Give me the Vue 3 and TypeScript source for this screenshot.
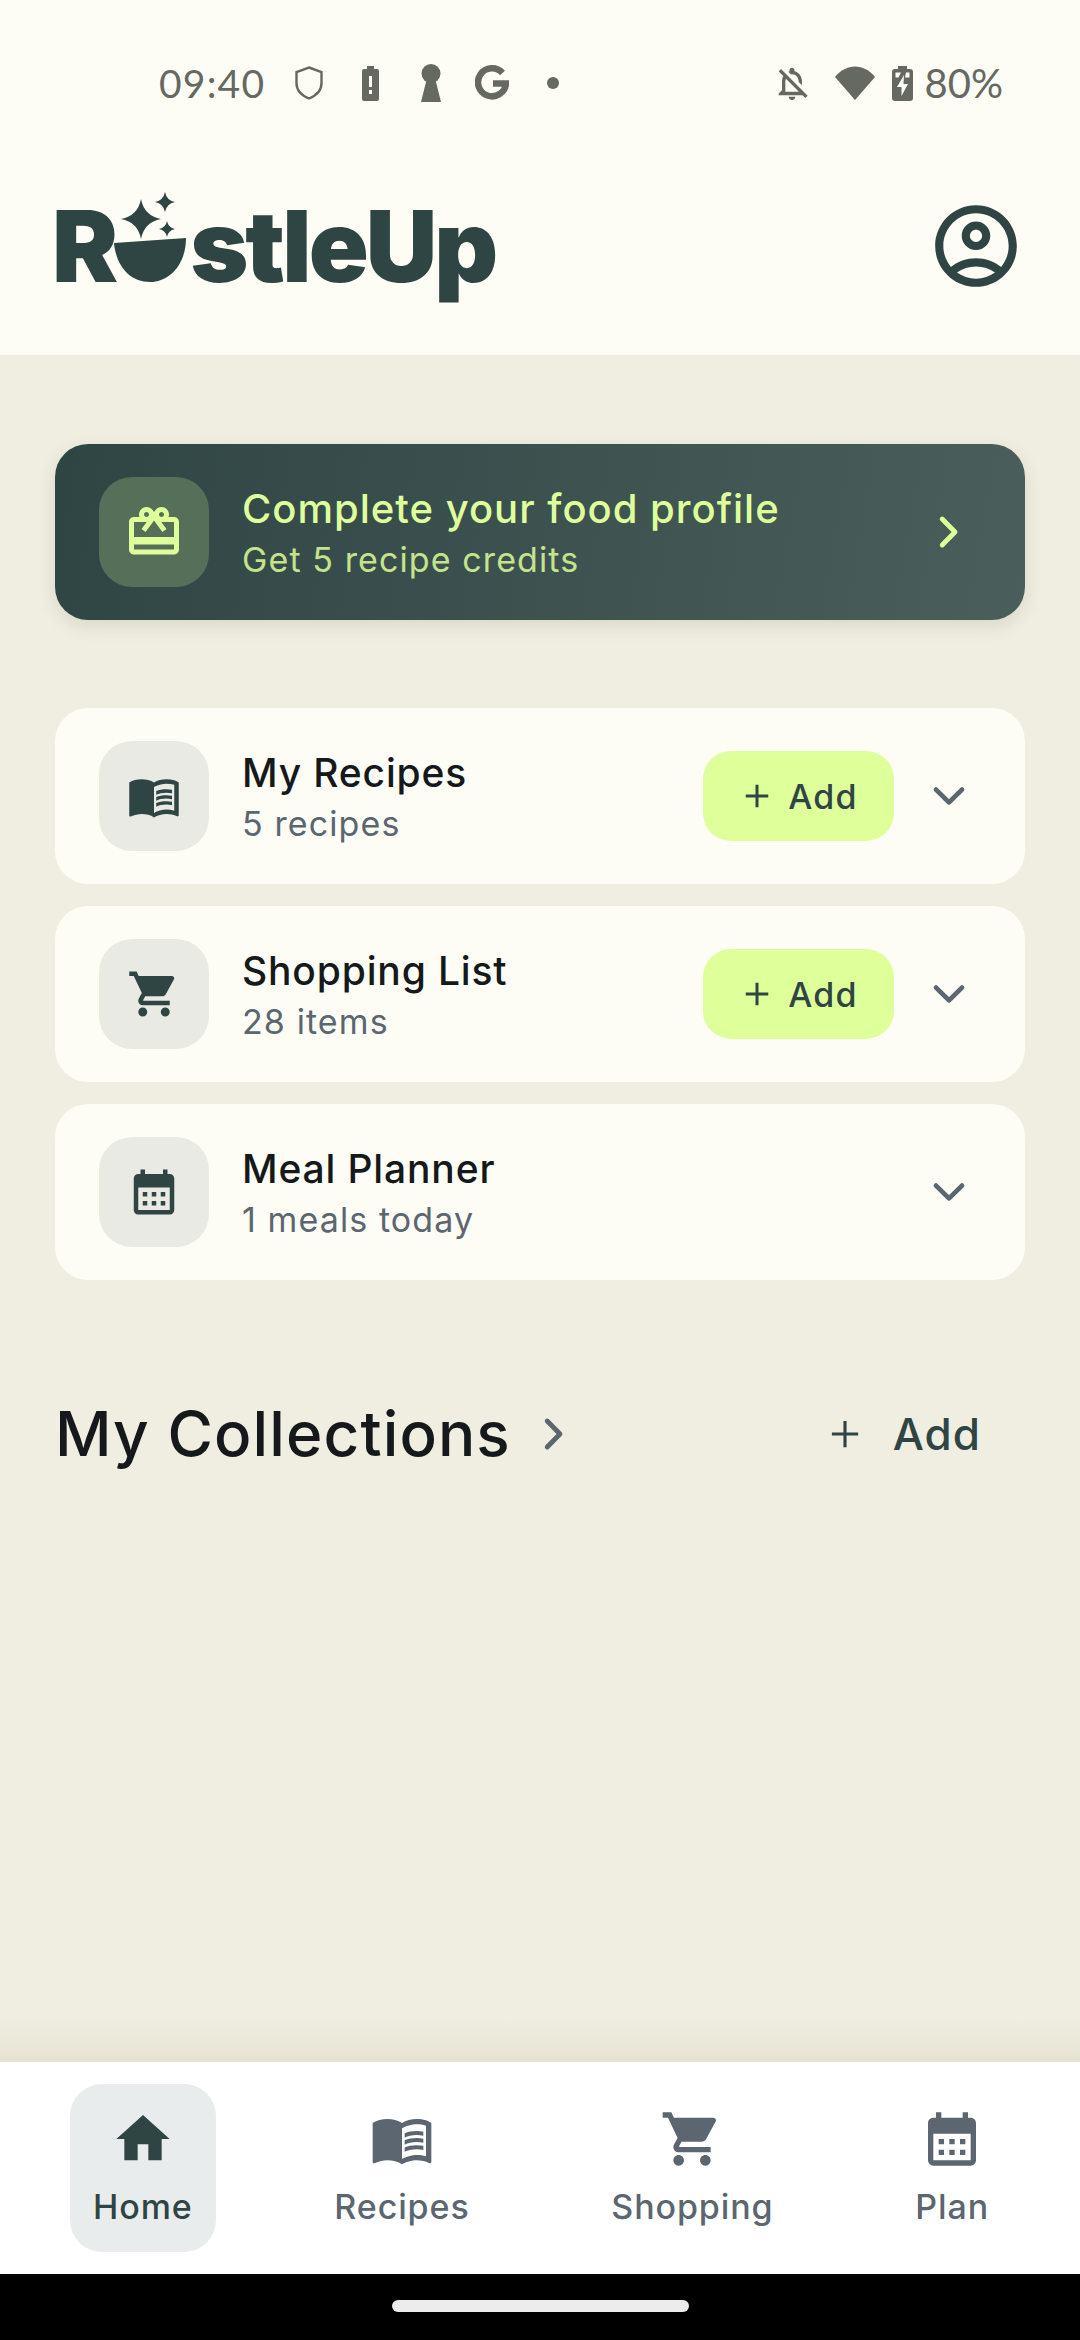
<script setup lang="ts">
const icons = {
  book: 'M21 5c-1.11-.35-2.33-.5-3.5-.5-1.95 0-4.05.4-5.5 1.5-1.45-1.1-3.55-1.5-5.5-1.5S2.45 4.9 1 6v14.65c0 .25.25.5.5.5.1 0 .15-.05.25-.05C3.1 20.45 5.05 20 6.5 20c1.95 0 4.05.4 5.5 1.5 1.35-.85 3.8-1.5 5.5-1.5 1.65 0 3.35.3 4.75 1.05.1.05.15.05.25.05.25 0 .5-.25.5-.5V6c-.6-.45-1.25-.75-2-1zm0 13.5c-1.1-.35-2.3-.5-3.5-.5-1.7 0-4.15.65-5.5 1.5V8c1.35-.85 3.8-1.5 5.5-1.5 1.2 0 2.4.15 3.5.5v11.5zM17.5 10.5c.88 0 1.73.09 2.5.26V9.24c-.79-.15-1.64-.24-2.5-.24-1.7 0-3.24.29-4.5.83v1.66c1.13-.64 2.7-.99 4.5-.99zM13 12.49v1.66c1.13-.64 2.7-.99 4.5-.99.88 0 1.73.09 2.5.26V11.9c-.79-.15-1.64-.24-2.5-.24-1.7 0-3.24.3-4.5.83zM17.5 14.33c-1.7 0-3.24.29-4.5.83v1.66c1.13-.64 2.7-.99 4.5-.99.88 0 1.73.09 2.5.26v-1.52c-.79-.16-1.64-.24-2.5-.24z',
  cart: 'M7 18c-1.1 0-1.99.9-1.99 2S5.9 22 7 22s2-.9 2-2-.9-2-2-2zM1 2v2h2l3.6 7.59-1.35 2.45c-.16.28-.25.61-.25.96 0 1.1.9 2 2 2h12v-2H7.42c-.14 0-.25-.11-.25-.25l.03-.12.9-1.63h7.45c.75 0 1.41-.41 1.75-1.03l3.58-6.49c.08-.14.12-.31.12-.48 0-.55-.45-1-1-1H5.21l-.94-2H1zm16 16c-1.1 0-1.99.9-1.99 2s.89 2 1.99 2 2-.9 2-2-.9-2-2-2z',
  calendar: 'M19 4h-1V2h-2v2H8V2H6v2H5c-1.11 0-1.99.9-1.99 2L3 20a2 2 0 0 0 2 2h14c1.1 0 2-.9 2-2V6c0-1.1-.9-2-2-2zm0 16H5V10h14v10zM9 14H7v-2h2v2zm4 0h-2v-2h2v2zm4 0h-2v-2h2v2zm-8 4H7v-2h2v2zm4 0h-2v-2h2v2zm4 0h-2v-2h2v2z',
  home: 'M10 20v-6h4v6h5v-8h3L12 3 2 12h3v8z',
  gift: 'M20 6h-2.18c.11-.31.18-.65.18-1 0-1.66-1.34-3-3-3-1.05 0-1.96.54-2.5 1.35l-.5.67-.5-.68C10.96 2.54 10.05 2 9 2 7.34 2 6 3.34 6 5c0 .35.07.69.18 1H4c-1.11 0-1.99.89-1.99 2L2 19c0 1.11.89 2 2 2h16c1.11 0 2-.89 2-2V8c0-1.11-.89-2-2-2zm-5-2c.55 0 1 .45 1 1s-.45 1-1 1-1-.45-1-1 .45-1 1-1zM9 4c.55 0 1 .45 1 1s-.45 1-1 1-1-.45-1-1 .45-1 1-1zm11 15H4v-2h16v2zm0-5H4V8h5.08L7 10.83 8.62 12 11 8.76l1-1.36 1 1.36L15.38 12 17 10.83 14.92 8H20v6z',
  account: 'M12 2C6.48 2 2 6.48 2 12s4.48 10 10 10 10-4.48 10-10S17.52 2 12 2zM7.35 18.5C8.66 17.56 10.26 17 12 17s3.34.56 4.65 1.5c-1.31.94-2.91 1.5-4.65 1.5s-3.34-.56-4.65-1.5zm10.79-1.38C16.45 15.8 14.32 15 12 15s-4.45.8-6.14 2.12C4.7 15.73 4 13.95 4 12c0-4.42 3.58-8 8-8s8 3.58 8 8c0 1.95-.7 3.73-1.86 5.12zM12 6c-1.93 0-3.5 1.57-3.5 3.5S10.07 13 12 13s3.5-1.57 3.5-3.5S13.93 6 12 6zm0 5c-.83 0-1.5-.67-1.5-1.5S11.17 8 12 8s1.5.67 1.5 1.5S12.83 11 12 11z',
  bellOff: 'M12 22c1.1 0 2-.9 2-2h-4c0 1.1.9 2 2 2zm0-15.5c2.49 0 4 2.02 4 4.5v.1l2 2V11c0-3.07-1.63-5.64-4.5-6.32V4c0-.83-.67-1.5-1.5-1.5s-1.5.67-1.5 1.5v.68c-.24.06-.47.15-.69.23l1.64 1.64c.18-.02.36-.05.55-.05zM5.41 3.35L4 4.76l2.81 2.81C6.29 8.57 6 9.74 6 11v5l-2 2v1h14.24l1.74 1.74 1.41-1.41L5.41 3.35zM16 17H8v-6c0-.68.12-1.32.34-1.9L16 16.76V17z',
}

const cards = [
  { title: 'My Recipes', sub: '5 recipes', icon: icons.book, add: true },
  { title: 'Shopping List', sub: '28 items', icon: icons.cart, add: true },
  { title: 'Meal Planner', sub: '1 meals today', icon: icons.calendar, add: false },
]

const tabs = [
  { label: 'Home', icon: icons.home, active: true },
  { label: 'Recipes', icon: icons.book, active: false },
  { label: 'Shopping', icon: icons.cart, active: false },
  { label: 'Plan', icon: icons.calendar, active: false },
]

function sparkle(cx: number, cy: number, r: number): string {
  const k = r * 0.16
  return `M${cx} ${cy - r}Q${cx + k} ${cy - k} ${cx + r} ${cy}Q${cx + k} ${cy + k} ${cx} ${cy + r}Q${cx - k} ${cy + k} ${cx - r} ${cy}Q${cx - k} ${cy - k} ${cx} ${cy - r}Z`
}
const sparkles = [sparkle(27, 29, 20), sparkle(51, 12, 10), sparkle(53, 39, 8)].join('')
</script>

<template>
  <div class="screen">
    <header class="top">
      <div class="status">
        <span class="time">09:40</span>
        <span class="sb"><svg width="28" height="34" viewBox="0 0 28 34"><path d="M14 1.500 26.500 6v11c0 7-5 12.500-12.500 15.500C6.500 29.500 1.500 24 1.500 17V6z" fill="none" stroke="#666862" stroke-width="2.400" /></svg></span>
        <span class="sb"><svg width="17" height="35" viewBox="0 0 17 35"><path fill-rule="evenodd" d="M5 0h7v3h3a2 2 0 0 1 2 2v28a2 2 0 0 1-2 2H2a2 2 0 0 1-2-2V5a2 2 0 0 1 2-2h3zM7 10v11h3V10zM7 24v4h3v-4z" fill="#666862" /></svg></span>
        <span class="sb"><svg width="20" height="38" viewBox="0 0 20 38"><circle cx="10" cy="9.500" r="9.500" fill="#666862" /><path d="M6 14h8l6 24H0z" fill="#666862" /></svg></span>
        <span class="sb"><svg width="34" height="36" viewBox="0 0 34 36"><path d="M27.500 8A14 14 0 1 0 31 18.500H18" fill="none" stroke="#666862" stroke-width="6.500" /></svg></span>
        <span class="sb"><svg width="12" height="12" viewBox="0 0 12 12"><circle cx="6" cy="6" r="6" fill="#666862" /></svg></span>
        <span class="sb bell"><svg width="43" height="43" viewBox="0 0 24 24"><path :d="icons.bellOff" fill="#666862" /></svg></span>
        <svg class="wifi" width="40" height="34" viewBox="0 0 40 34"><path d="M0 11C11-3 29-3 40 11L20 34z" fill="#666862" /></svg>
        <svg class="batt" width="21" height="35" viewBox="0 0 21 35"><path fill-rule="evenodd" d="M6 0h9v3h3a3 3 0 0 1 3 3v26a3 3 0 0 1-3 3H3a3 3 0 0 1-3-3V6a3 3 0 0 1 3-3h3zM12 9 5 21h4.500v9L16 18h-4.500zM3.500 6.500v5h3l2.500-5zM14 6.500l-1 5h4.500v-5z" fill="#666862" /></svg>
        <span class="pct">80%</span>
      </div>
      <div class="brand">
        <div class="logo">
          <span>R</span>
          <svg class="bowl" width="72" height="92" viewBox="0 0 72 92">
            <path :d="sparkles" fill="#2f4544" />
            <path d="M0 53 72 48C72 75 55 92 36 92 15 92 2 75 0 53z" fill="#2f4544" />
          </svg>
          <span class="rest">stleUp</span>
        </div>
        <svg class="account" width="98" height="98" viewBox="0 0 24 24"><path :d="icons.account" fill="#2f4544" /></svg>
      </div>
    </header>

    <main class="content">
      <section class="promo">
        <div class="tile promo-tile">
          <svg width="60" height="60" viewBox="0 0 24 24"><path :d="icons.gift" fill="#dfff9a" /></svg>
        </div>
        <div class="promo-text">
          <div class="promo-title">Complete your food profile</div>
          <div class="promo-sub">Get 5 recipe credits</div>
        </div>
        <svg class="chev" width="48" height="48" viewBox="0 0 24 24"><path d="M8.600 5.500 15 12l-6.400 6.500" fill="none" stroke="#dfff9a" stroke-width="2.400" stroke-linecap="round" stroke-linejoin="round" /></svg>
      </section>

      <div class="cards">
        <section v-for="c in cards" :key="c.title" class="card">
          <div class="tile">
            <svg width="54" height="54" viewBox="0 0 24 24"><path :d="c.icon" fill="#2f4544" /></svg>
          </div>
          <div class="card-text">
            <div class="card-title">{{ c.title }}</div>
            <div class="card-sub">{{ c.sub }}</div>
          </div>
          <div v-if="c.add" class="add-btn">
            <svg width="36" height="36" viewBox="0 0 24 24"><path d="M12 4.500v15M4.500 12h15" stroke="#2f4544" stroke-width="2" fill="none" /></svg>
            <span>Add</span>
          </div>
          <svg class="chev" width="48" height="48" viewBox="0 0 24 24"><path d="M5.500 8.800 12 15.200l6.500-6.400" fill="none" stroke="#5b6670" stroke-width="2.400" stroke-linecap="round" stroke-linejoin="round" /></svg>
        </section>
      </div>

      <div class="coll-head">
        <h2>My Collections</h2>
        <svg width="48" height="48" viewBox="0 0 24 24"><path d="M8.600 5.500 15 12l-6.400 6.500" fill="none" stroke="#5b6670" stroke-width="2.400" stroke-linecap="round" stroke-linejoin="round" /></svg>
        <div class="coll-add">
          <svg width="42" height="42" viewBox="0 0 24 24"><path d="M12 4.500v15M4.500 12h15" stroke="#2f4544" stroke-width="1.800" fill="none" /></svg>
          <span>Add</span>
        </div>
      </div>
      <div class="nav-shade"></div>
    </main>

    <nav class="tabs">
      <div v-for="t in tabs" :key="t.label" class="tab" :class="{ active: t.active }">
        <svg width="64" height="64" viewBox="0 0 24 24"><path :d="t.icon" fill="currentColor" /></svg>
        <span>{{ t.label }}</span>
      </div>
    </nav>
    <div class="gesture"><div class="handle"></div></div>
  </div>
</template>

<style>
html, body { margin: 0; background: #f0eee0; }
</style>

<style scoped>
.screen {
  width: 1080px;
  height: 2340px;
  display: flex;
  flex-direction: column;
  overflow: hidden;
  font-family: Inter, "Noto Sans", sans-serif;
  color: #15191b;
}
.top { background: #fdfdf5; height: 355px; flex: none; }
.status {
  height: 110px;
  padding: 56px 79px 0 159px;
  box-sizing: border-box;
  display: flex;
  align-items: center;
  gap: 21px;
  color: #666862;
  font-size: 36px;
  font-family: Lato, Inter, sans-serif;
}
.time { font-size: 39px; letter-spacing: 1.2px; line-height: 1; margin-right: 3px; }
.sb { width: 40px; display: flex; justify-content: center; align-items: center; }
.bell { margin-left: auto; }
.wifi { margin-left: 2px; }
.batt { margin-left: -4px; }
.pct { font-size: 40px; margin-left: -9px; margin-right: -2px; line-height: 1; }

.brand {
  height: 245px;
  padding: 0 55px 0 52px;
  display: flex;
  align-items: center;
  justify-content: space-between;
}
.logo {
  display: flex;
  align-items: baseline;
  font-weight: 900;
  font-size: 99px;
  line-height: 1;
  letter-spacing: -3px;
  color: #2f4544;
  margin-top: 20px;
}
.bowl { margin: 0 4px -5px -1px; overflow: visible; }
.rest { letter-spacing: -3px; }
.account { display: block; margin-top: 27px; }

.content {
  flex: 1;
  position: relative;
  padding: 89px 55px 0;
  display: flex;
  flex-direction: column;
}
.promo {
  height: 176px;
  box-sizing: border-box;
  border-radius: 33px;
  padding: 0 52px 0 44px;
  display: flex;
  align-items: center;
  background: linear-gradient(100deg, #2f4544, #4a5f5b);
  box-shadow: 0 6px 18px rgba(60, 60, 30, 0.12);
}
.tile {
  width: 110px;
  height: 110px;
  flex: none;
  border-radius: 33px;
  background: #e9eae4;
  display: flex;
  align-items: center;
  justify-content: center;
}
.promo-tile { background: #566f59; }
.promo-text, .card-text { flex: 1; margin-left: 33px; }
.promo-title { font-size: 40px; font-weight: 500; color: #dfff9a; line-height: 50px; letter-spacing: 1px; }
.promo-sub { font-size: 34px; color: #c6e38b; line-height: 42px; margin-top: 5px; letter-spacing: 1.1px; }
.chev { flex: none; }

.cards { display: flex; flex-direction: column; gap: 22px; margin-top: 88px; }
.card {
  height: 176px;
  box-sizing: border-box;
  border-radius: 33px;
  padding: 0 52px 0 44px;
  background: #fdfdf5;
  display: flex;
  align-items: center;
}
.card-title { font-size: 39px; font-weight: 500; line-height: 50px; letter-spacing: 0.85px; }
.card-sub { font-size: 34px; color: #5b6670; line-height: 42px; margin-top: 5px; letter-spacing: 1.1px; }
.add-btn {
  width: 191px;
  height: 90px;
  border-radius: 28px;
  background: #dfff9a;
  display: flex;
  align-items: center;
  justify-content: center;
  gap: 13px;
  font-size: 34px;
  font-weight: 500;
  letter-spacing: 1.2px;
  color: #2f4544;
  margin-right: 31px;
}
.coll-head {
  display: flex;
  align-items: center;
  margin-top: 119px;
  height: 70px;
}
.coll-head h2 { margin: 0 19px 0 0; font-size: 62px; font-weight: 500; line-height: 1; letter-spacing: 1.1px; }
.coll-add {
  margin-left: auto;
  margin-right: 44px;
  display: flex;
  align-items: center;
  gap: 27px;
  font-size: 44px;
  font-weight: 500;
  letter-spacing: 1px;
  color: #2f4544;
}
.nav-shade {
  position: absolute;
  left: 0;
  right: 0;
  bottom: 0;
  height: 44px;
  background: linear-gradient(rgba(230, 227, 211, 0), #e6e3d3);
}

.tabs {
  height: 212px;
  flex: none;
  box-sizing: border-box;
  background: #fff;
  padding: 0 68px 0 70px;
  display: flex;
  align-items: center;
  justify-content: space-between;
}
.tab {
  height: 168px;
  padding: 0 23px;
  box-sizing: border-box;
  border-radius: 32px;
  display: flex;
  flex-direction: column;
  align-items: center;
  justify-content: center;
  gap: 14px;
  color: #5b6670;
  font-size: 34px;
  font-weight: 500;
  letter-spacing: 0.9px;
}
.tab svg { display: block; }
.tab span { line-height: 44px; }
.tab.active { background: #e9ecec; color: #2f4544; }
.gesture {
  height: 66px;
  flex: none;
  background: #000;
  display: flex;
  align-items: center;
  justify-content: center;
}
.handle { width: 297px; height: 12px; border-radius: 6px; background: #ececec; margin-top: -3px; }
</style>
